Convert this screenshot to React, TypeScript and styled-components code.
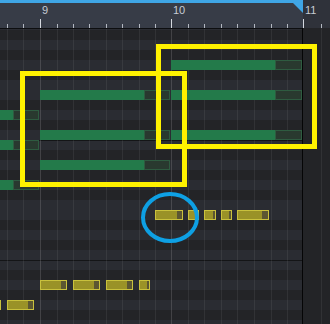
import React from "react";
import styled, { createGlobalStyle } from "styled-components";

const GlobalStyle = createGlobalStyle`
  body {
    margin: 0;
    background: #232427;
    font-family: "Liberation Sans", Arial, sans-serif;
  }
`;

const TICKS = [7, 23, 40, 57, 73, 89, 106, 122, 139, 155, 171, 188, 204, 221, 237, 254, 271, 287, 303, 321];
const BARS: Record<number, string> = { 40: "9", 171: "10", 303: "11" };

type Pitch = { name: string; black: boolean; octave?: boolean; h?: number };

const PITCHES: Pitch[] = [
  { name: "B", black: false, h: 1 },
  { name: "A#", black: true },
  { name: "A", black: false },
  { name: "G#", black: true },
  { name: "G", black: false },
  { name: "F#", black: true },
  { name: "F", black: false },
  { name: "E", black: false },
  { name: "D#", black: true },
  { name: "D", black: false },
  { name: "C#", black: true },
  { name: "C", black: false },
  { name: "B", black: false, octave: true },
  { name: "A#", black: true },
  { name: "A", black: false },
  { name: "G#", black: true },
  { name: "G", black: false },
  { name: "F#", black: true },
  { name: "F", black: false },
  { name: "E", black: false },
  { name: "D#", black: true },
  { name: "D", black: false },
  { name: "C#", black: true },
  { name: "C", black: false },
  { name: "B", black: false, octave: true },
  { name: "A#", black: true },
  { name: "A", black: false },
  { name: "G#", black: true },
  { name: "G", black: false },
  { name: "F#", black: true },
  { name: "F", black: false },
];

// x, y in page pixels, w = length, f = where the bright part stops (from x)
const CHORDS = [
  { x: -91, w: 130, f: 104, ys: [110, 140, 180] },
  { x: 40, w: 130, f: 104, ys: [90, 130, 160] },
  { x: 171, w: 131, f: 104, ys: [60, 90, 130] },
];

const MELODY = [
  { x: 155, y: 210, w: 28, d: 177 },
  { x: 188, y: 210, w: 11, d: 196 },
  { x: 204, y: 210, w: 12, d: 213 },
  { x: 221, y: 210, w: 11, d: 229 },
  { x: 237, y: 210, w: 32, d: 262 },
  { x: 40, y: 280, w: 27, d: 61 },
  { x: 73, y: 280, w: 27, d: 94 },
  { x: 106, y: 280, w: 27, d: 127 },
  { x: 139, y: 280, w: 11, d: 147 },
  { x: -26, y: 300, w: 27, d: -5 },
  { x: 7, y: 300, w: 27, d: 28 },
];

const GRID_TOP = 29;

const Frame = styled.div`
  position: relative;
  width: 330px;
  height: 324px;
  overflow: hidden;
  display: flex;
  flex-direction: column;
  background: #232427;
`;

const Ruler = styled.div`
  position: relative;
  display: flex;
  height: 28px;
  flex-shrink: 0;
`;

const RulerMain = styled.div`
  position: relative;
  width: 303px;
  box-sizing: border-box;
  border-top: 3px solid #3fa6e6;
  background: #373c47;
`;

const LoopEnd = styled.div`
  position: absolute;
  right: 0;
  top: 0;
  width: 0;
  height: 0;
  border-top: 10px solid #3fa6e6;
  border-left: 10px solid transparent;
`;

const RulerTail = styled.div`
  flex: 1;
  background: #2f323a;
`;

const Tick = styled.div<{ $major?: boolean }>`
  position: absolute;
  bottom: 0;
  width: 1px;
  height: ${(p) => (p.$major ? 9 : 4)}px;
  background: ${(p) => (p.$major ? "#d4d8df" : "#b3b8c1")};
`;

const BarLabel = styled.span`
  position: absolute;
  top: 5px;
  font-size: 11px;
  line-height: 11px;
  color: #c6cbd3;
`;

const Body = styled.div`
  display: flex;
  flex: 1;
  min-height: 0;
`;

const GridMain = styled.div`
  position: relative;
  width: 302px;
  border-top: 1px solid #0d0e10;
  overflow: hidden;
  display: flex;
  flex-direction: column;
`;

const KeyRow = styled.div<{ $black: boolean; $octave?: boolean; $h: number }>`
  flex-shrink: 0;
  height: ${(p) => p.$h}px;
  box-sizing: border-box;
  background: ${(p) => (p.$black ? "#232427" : "#2a2c32")};
  border-top: ${(p) => (p.$octave ? "1px solid #141517" : "none")};
`;

const LineLayer = styled.div`
  position: absolute;
  inset: 0;
  pointer-events: none;
`;

const GridLine = styled.div<{ $bar?: boolean }>`
  position: absolute;
  top: 0;
  bottom: 0;
  width: 1px;
  background: ${(p) => (p.$bar ? "rgba(255,255,255,0.14)" : "rgba(255,255,255,0.065)")};
`;

const Divider = styled.div`
  width: 1px;
  background: #050506;
`;

const GridTail = styled.div`
  position: relative;
  flex: 1;
  background: #232427;
`;

const NoteBox = styled.div<{ $kind: "chord" | "melody" }>`
  position: absolute;
  height: 10px;
  display: flex;
  box-sizing: border-box;
  border: ${(p) => (p.$kind === "melody" ? "1px solid #c9c13d" : "none")};
`;

const NoteFill = styled.div<{ $kind: "chord" | "melody" }>`
  flex-shrink: 0;
  height: 100%;
  background: ${(p) => (p.$kind === "melody" ? "#9a9227" : "#237a4a")};
`;

const NoteRest = styled.div<{ $kind: "chord" | "melody" }>`
  flex: 1;
  height: 100%;
  box-sizing: border-box;
  background: ${(p) => (p.$kind === "melody" ? "#5b5632" : "#29392f")};
  border: ${(p) => (p.$kind === "melody" ? "none" : "1px solid #2e5b40")};
`;

const Highlight = styled.div`
  position: absolute;
  box-sizing: border-box;
  border: 5px solid #fff200;
  pointer-events: none;
`;

const Ring = styled.svg`
  position: absolute;
  left: 141px;
  top: 192px;
  pointer-events: none;
`;

function Note({ kind, x, y, w, fill }: { kind: "chord" | "melody"; x: number; y: number; w: number; fill: number }) {
  return (
    <NoteBox $kind={kind} style={{ left: x, top: y - GRID_TOP, width: w }}>
      <NoteFill $kind={kind} style={{ width: Math.max(fill, 0) }} />
      <NoteRest $kind={kind} />
    </NoteBox>
  );
}

export default function App() {
  return (
    <>
      <GlobalStyle />
      <Frame>
        <Ruler>
          <RulerMain>
            <LoopEnd />
          </RulerMain>
          <RulerTail />
          {TICKS.map((x) => (
            <Tick key={x} $major={!!BARS[x]} style={{ left: x }} />
          ))}
          {Object.entries(BARS).map(([x, label]) => (
            <BarLabel key={x} style={{ left: Number(x) + 2 }}>
              {label}
            </BarLabel>
          ))}
        </Ruler>

        <Body>
          <GridMain>
            {PITCHES.map((p, i) => (
              <KeyRow key={i} $black={p.black} $octave={p.octave} $h={p.h ?? 10} />
            ))}
            <LineLayer>
              {TICKS.filter((x) => x < 302).map((x) => (
                <GridLine key={x} $bar={!!BARS[x]} style={{ left: x }} />
              ))}
            </LineLayer>
            {CHORDS.map((c) =>
              c.ys.map((y) => <Note key={`${c.x}-${y}`} kind="chord" x={c.x} y={y} w={c.w} fill={c.f} />)
            )}
            {MELODY.map((n) => (
              <Note key={`${n.x}-${n.y}`} kind="melody" x={n.x} y={n.y} w={n.w} fill={n.d - n.x - 1} />
            ))}
          </GridMain>
          <Divider />
          <GridTail>
            <GridLine style={{ left: 18 }} />
          </GridTail>
        </Body>

        <Highlight style={{ left: 20, top: 71, width: 167, height: 116 }} />
        <Highlight style={{ left: 156, top: 44, width: 161, height: 105 }} />
        <Ring width={58} height={51} viewBox="0 0 58 51">
          <ellipse cx={29} cy={25.5} rx={27} ry={23.5} fill="none" stroke="#0ea0e4" strokeWidth={4} />
        </Ring>
      </Frame>
    </>
  );
}
